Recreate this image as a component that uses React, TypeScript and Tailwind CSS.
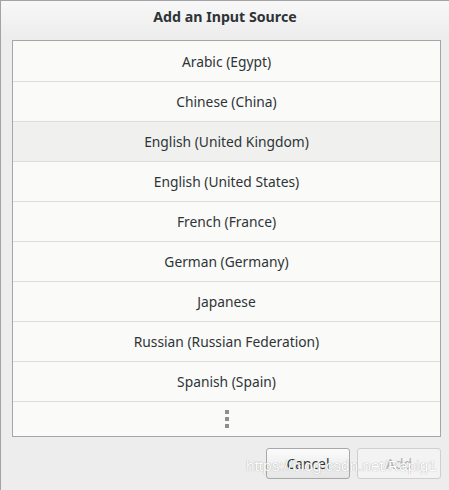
import React from "react";

const items = [
  "Arabic (Egypt)",
  "Chinese (China)",
  "English (United Kingdom)",
  "English (United States)",
  "French (France)",
  "German (Germany)",
  "Japanese",
  "Russian (Russian Federation)",
  "Spanish (Spain)",
];

export default function App() {
  return (
    <div
      className="relative w-[449px] h-[490px] overflow-hidden bg-[#ededed] border-l border-t border-[#a3a3a3] text-[#2e3436] flex flex-col"
      style={{ fontFamily: '"Noto Sans", "DejaVu Sans", sans-serif' }}
    >
      <div className="h-[39px] bg-gradient-to-b from-[#f8f8f8] to-[#ececec] flex items-center justify-center pb-[8px]">
        <span className="text-[14.2px] font-bold">Add an Input Source</span>
      </div>
      <div className="ml-[11px] mr-[8px] border border-[#a6a6a6] bg-[#fafaf9] flex flex-col">
        {items.map((it, i) => (
          <div
            key={it}
            className={
              (i === 0 ? "h-[41px] " : "h-[40px] ") +
              "flex items-center justify-center border-b border-[#dcdcdc] text-[13.8px] pt-[2px] " +
              (i === 2 ? "bg-[#f0f0ef]" : "")
            }
          >
            {it}
          </div>
        ))}
        <div className="h-[34px] flex flex-col items-center justify-center gap-[3px]">
          <div className="w-[4px] h-[4px] bg-[#8e8e8e]" />
          <div className="w-[4px] h-[4px] bg-[#8e8e8e]" />
          <div className="w-[4px] h-[4px] bg-[#8e8e8e]" />
        </div>
      </div>
      <div className="flex justify-end gap-[7px] mr-[8px] mt-[11px]">
        <button className="w-[84px] h-[31px] rounded-[3px] border border-[#a8a8a8] bg-gradient-to-b from-[#fbfbfb] to-[#e6e6e6] text-[13.8px] text-[#2e3436] pt-[2px]">
          Cancel
        </button>
        <button className="w-[84px] h-[31px] rounded-[3px] border border-[#cfcfcf] bg-[#f3f3f3] text-[13.8px] text-[#b4b4b4] pt-[2px]">
          Add
        </button>
      </div>
      <div
        className="absolute left-[245px] top-[453px] text-[15.4px] text-white whitespace-nowrap"
        style={{
          fontFamily: '"Liberation Sans", Arial, sans-serif',
          textShadow: "0 0 1px rgba(110,110,110,0.75)",
        }}
      >
        https://blog.csdn.net/Rapig1
      </div>
    </div>
  );
}
